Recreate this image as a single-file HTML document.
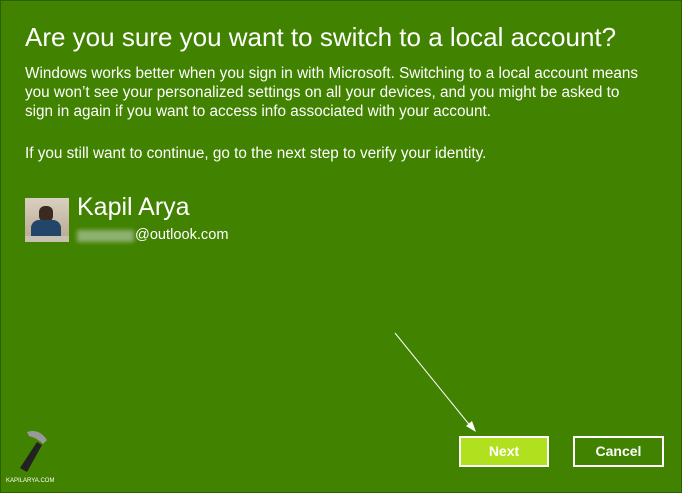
<!DOCTYPE html>
<html><head><meta charset="utf-8"><style>
body{margin:0;width:682px;height:493px;background:#418200;position:relative;overflow:hidden;font-family:"Liberation Sans",sans-serif;color:#fff}
.b{position:absolute;left:0;top:0;width:680px;height:491px;border:1px solid #2f5e00}
.t{position:absolute;left:25px;top:22px;font-size:26px;white-space:nowrap}
.p{position:absolute;left:25px;font-size:15.3px;white-space:nowrap}
.btn{position:absolute;top:436px;height:27px;border:2px solid #fff;font-weight:bold;font-size:14px;text-align:center;line-height:27px}
</style></head><body>
<div class="b"></div>
<div class="t">Are you sure you want to switch to a local account?</div>
<div class="p" style="top:65px">Windows works better when you sign in with Microsoft. Switching to a local account means</div>
<div class="p" style="top:84px">you won’t see your personalized settings on all your devices, and you might be asked to</div>
<div class="p" style="top:103px">sign in again if you want to access info associated with your account.</div>
<div class="p" style="top:145px">If you still want to continue, go to the next step to verify your identity.</div>
<div style="position:absolute;left:25px;top:198px;width:44px;height:44px;background:linear-gradient(#d8d0c0,#b8a890)">
<div style="position:absolute;left:14px;top:8px;width:14px;height:16px;border-radius:6px;background:#3a2a20"></div>
<div style="position:absolute;left:6px;top:22px;width:30px;height:18px;border-radius:8px 8px 0 0;background:#24456a"></div>
<div style="position:absolute;left:0;top:38px;width:44px;height:6px;background:#c8c0b0"></div></div>
<div style="position:absolute;left:77px;top:193px;font-size:25px">Kapil Arya</div>
<div style="position:absolute;left:77px;top:230px;width:57px;height:12px;background:#8fb070;filter:blur(2px)"></div>
<div class="p" style="left:135px;top:227px;font-size:14.6px">@outlook.com</div>
<svg style="position:absolute;left:0;top:0" width="682" height="493"><line x1="395" y1="333" x2="472" y2="428" stroke="#fff" stroke-width="1"/><polygon points="476,432 466,426 472,421" fill="#fff"/>
<g transform="translate(15,430)"><path d="M5 38 L22 12 L27 15 L12 42 Z" fill="#222"/><path d="M12 2 Q24 -2 32 10 L28 14 Q22 8 14 6 Z" fill="#999"/></g></svg>
<div style="position:absolute;left:6px;top:478px;font-size:6px">KAPILARYA.COM</div>
<div class="btn" style="left:459px;width:86px;background:#b0e01e">Next</div>
<div class="btn" style="left:573px;width:87px">Cancel</div>
</body></html>
